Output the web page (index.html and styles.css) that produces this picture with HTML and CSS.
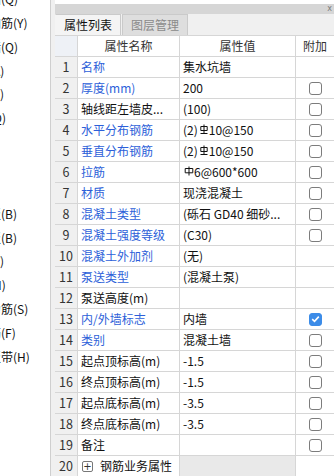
FILE: index.html
```html
<!DOCTYPE html>
<html lang="zh-CN">
<head>
<meta charset="utf-8">
<title>属性列表</title>
<link rel="stylesheet" href="styles.css">
</head>
<body>
<div class="app">
  <aside class="tree">
    <ul class="tree-list">
      <li class="leaf">砌体墙(Q)</li>
      <li class="leaf">砌体加筋(Y)</li>
      <li class="leaf">保温墙(Q)</li>
      <li class="leaf">暗梁(A)</li>
      <li class="leaf">墙垛(E)</li>
      <li class="leaf">幕墙(Q)</li>
      <li class="folder">门窗洞</li>
      <li class="folder">梁</li>
      <li class="folder">板</li>
      <li class="leaf">现浇板(B)</li>
      <li class="leaf">螺旋板(B)</li>
      <li class="leaf">柱帽(V)</li>
      <li class="leaf">板洞(N)</li>
      <li class="leaf">板受力筋(S)</li>
      <li class="leaf">板负筋(F)</li>
      <li class="leaf">楼层板带(H)</li>
    </ul>
  </aside>
  <div class="splitter"></div>
  <section class="panel">
    <div class="titlebar"><span class="close">x</span></div>
    <div class="tabs">
      <div class="tab active">属性列表</div>
      <div class="tab">图层管理</div>
    </div>
    <div class="grid">
      <div class="cell num head"></div>
      <div class="cell head center">属性名称</div>
      <div class="cell head center">属性值</div>
      <div class="cell head center">附加</div>

      <div class="cell num">1</div>
      <div class="cell name link">名称</div>
      <div class="cell val">集水坑墙</div>
      <div class="cell chk"></div>

      <div class="cell num">2</div>
      <div class="cell name link">厚度(mm)</div>
      <div class="cell val">200</div>
      <div class="cell chk"><span class="box"></span></div>

      <div class="cell num">3</div>
      <div class="cell name">轴线距左墙皮...</div>
      <div class="cell val">(100)</div>
      <div class="cell chk"><span class="box"></span></div>

      <div class="cell num">4</div>
      <div class="cell name link">水平分布钢筋</div>
      <div class="cell val">(2)<svg class="bar" width="10" height="10" viewBox="0 0 10 10"><path d="M5 0.5V9.5M1.5 9.5H8.5M1.8 2.5H8.2V6.5H1.8Z" fill="none" stroke="#111" stroke-width="1"/></svg>10@150</div>
      <div class="cell chk"><span class="box"></span></div>

      <div class="cell num">5</div>
      <div class="cell name link">垂直分布钢筋</div>
      <div class="cell val">(2)<svg class="bar" width="10" height="10" viewBox="0 0 10 10"><path d="M5 0.5V9.5M1.5 9.5H8.5M1.8 2.5H8.2V6.5H1.8Z" fill="none" stroke="#111" stroke-width="1"/></svg>10@150</div>
      <div class="cell chk"><span class="box"></span></div>

      <div class="cell num">6</div>
      <div class="cell name link">拉筋</div>
      <div class="cell val"><svg class="bar" width="10" height="10" viewBox="0 0 10 10"><path d="M5 0.5V9.5M1.2 2.5H8.8V6.8H1.2Z" fill="none" stroke="#111" stroke-width="1"/></svg>6@600*600</div>
      <div class="cell chk"><span class="box"></span></div>

      <div class="cell num">7</div>
      <div class="cell name link">材质</div>
      <div class="cell val">现浇混凝土</div>
      <div class="cell chk"><span class="box"></span></div>

      <div class="cell num">8</div>
      <div class="cell name link">混凝土类型</div>
      <div class="cell val">(砾石 GD40 细砂...</div>
      <div class="cell chk"><span class="box"></span></div>

      <div class="cell num">9</div>
      <div class="cell name link">混凝土强度等级</div>
      <div class="cell val">(C30)</div>
      <div class="cell chk"><span class="box"></span></div>

      <div class="cell num">10</div>
      <div class="cell name link">混凝土外加剂</div>
      <div class="cell val">(无)</div>
      <div class="cell chk"></div>

      <div class="cell num">11</div>
      <div class="cell name link">泵送类型</div>
      <div class="cell val">(混凝土泵)</div>
      <div class="cell chk"></div>

      <div class="cell num">12</div>
      <div class="cell name">泵送高度(m)</div>
      <div class="cell val"></div>
      <div class="cell chk"></div>

      <div class="cell num">13</div>
      <div class="cell name link">内/外墙标志</div>
      <div class="cell val">内墙</div>
      <div class="cell chk"><span class="box checked"><svg width="9" height="8" viewBox="0 0 9 8"><path d="M1.2 4.2L3.5 6.3L7.8 1.6" fill="none" stroke="#fff" stroke-width="1.6"/></svg></span></div>

      <div class="cell num">14</div>
      <div class="cell name link">类别</div>
      <div class="cell val">混凝土墙</div>
      <div class="cell chk"><span class="box"></span></div>

      <div class="cell num">15</div>
      <div class="cell name">起点顶标高(m)</div>
      <div class="cell val">-1.5</div>
      <div class="cell chk"><span class="box"></span></div>

      <div class="cell num">16</div>
      <div class="cell name">终点顶标高(m)</div>
      <div class="cell val">-1.5</div>
      <div class="cell chk"><span class="box"></span></div>

      <div class="cell num">17</div>
      <div class="cell name">起点底标高(m)</div>
      <div class="cell val">-3.5</div>
      <div class="cell chk"><span class="box"></span></div>

      <div class="cell num">18</div>
      <div class="cell name">终点底标高(m)</div>
      <div class="cell val">-3.5</div>
      <div class="cell chk"><span class="box"></span></div>

      <div class="cell num">19</div>
      <div class="cell name">备注</div>
      <div class="cell val"></div>
      <div class="cell chk"><span class="box"></span></div>

      <div class="cell num">20</div>
      <div class="cell name"><span class="expand">+</span>钢筋业务属性</div>
      <div class="cell val group"></div>
      <div class="cell chk"></div>
    </div>
  </section>
</div>
</body>
</html>
```

FILE: styles.css
```css
html, body {
  margin: 0;
  padding: 0;
  background: #ffffff;
}

body {
  font-family: "Noto Sans CJK SC", "Noto Sans", sans-serif;
  font-size: 12px;
  color: #111;
}

.app {
  display: flex;
  width: 334px;
  height: 476px;
  overflow: hidden;
}

.tree {
  width: 50px;
  flex: none;
  overflow: hidden;
  background: #fff;
}

.tree-list {
  list-style: none;
  margin: -13px 0 0 0;
  padding: 0;
}

.tree-list li {
  height: 23.86px;
  line-height: 23.86px;
  white-space: nowrap;
}

.tree-list .leaf {
  margin-left: -35px;
}

.tree-list .folder {
  margin-left: -60px;
}

.splitter {
  width: 4px;
  flex: none;
  border-left: 1px solid #cfcfcf;
  background: #f0f0f0;
}

.panel {
  flex: 1;
  display: flex;
  flex-direction: column;
  margin-top: 4px;
  min-width: 0;
}

.titlebar {
  height: 11px;
  background: #d6d6d6;
  display: flex;
  justify-content: flex-end;
  align-items: center;
}

.close {
  font-family: "DejaVu Sans", sans-serif;
  font-size: 8px;
  line-height: 8px;
  color: #7a7a7a;
  margin-right: 2px;
}

.tabs {
  height: 22px;
  background: #f0f0f0;
  display: flex;
  align-items: flex-end;
  box-sizing: border-box;
}

.tab {
  height: 21px;
  box-sizing: border-box;
  padding: 0 8px;
  line-height: 20px;
  font-size: 12px;
  color: #8a8a8a;
  background: #dedede;
  border: 1px solid #cacaca;
  border-bottom: none;
  margin-right: 1px;
}

.tab.active {
  color: #111;
  background: #f4f4f4;
  border-left-color: #f4f4f4;
}

.grid {
  display: grid;
  grid-template-columns: 22px 101px 115px 38px;
  grid-auto-rows: 20px;
  gap: 1px;
  background: #d6d6d6;
  border-top: 1px solid #d6d6d6;
}

.cell {
  background: #fff;
  line-height: 20px;
  white-space: nowrap;
  overflow: hidden;
  display: flex;
  align-items: center;
}

.cell.head {
  color: #333;
}

.cell.center {
  justify-content: center;
}

.cell.num {
  background: #f0f0f0;
  justify-content: center;
  color: #333;
  font-size: 12.5px;
}

.cell.num.head {
  background: #eef1f6;
}

.cell.name {
  padding-left: 3px;
}

.cell.name.link {
  color: #2d5fd9;
}

.cell.val {
  padding-left: 3px;
}

.cell.val.group {
  background: #e9e9e9;
}

.cell.chk {
  justify-content: center;
  padding-left: 1px;
}

.bar {
  display: block;
  margin: -3px 0 0 1px;
  flex: none;
}

.box {
  width: 13px;
  height: 13px;
  box-sizing: border-box;
  border: 1px solid #7c7c7c;
  border-radius: 3px;
  background: #fff;
  display: flex;
  align-items: center;
  justify-content: center;
}

.box.checked {
  background: #3c8ce8;
  border-color: #3c8ce8;
}

.expand {
  width: 11px;
  height: 11px;
  box-sizing: border-box;
  border: 1px solid #777;
  border-radius: 2px;
  font-family: "DejaVu Sans", sans-serif;
  font-size: 10px;
  line-height: 9px;
  text-align: center;
  color: #333;
  margin: 0 7px 0 1px;
  flex: none;
}
```
